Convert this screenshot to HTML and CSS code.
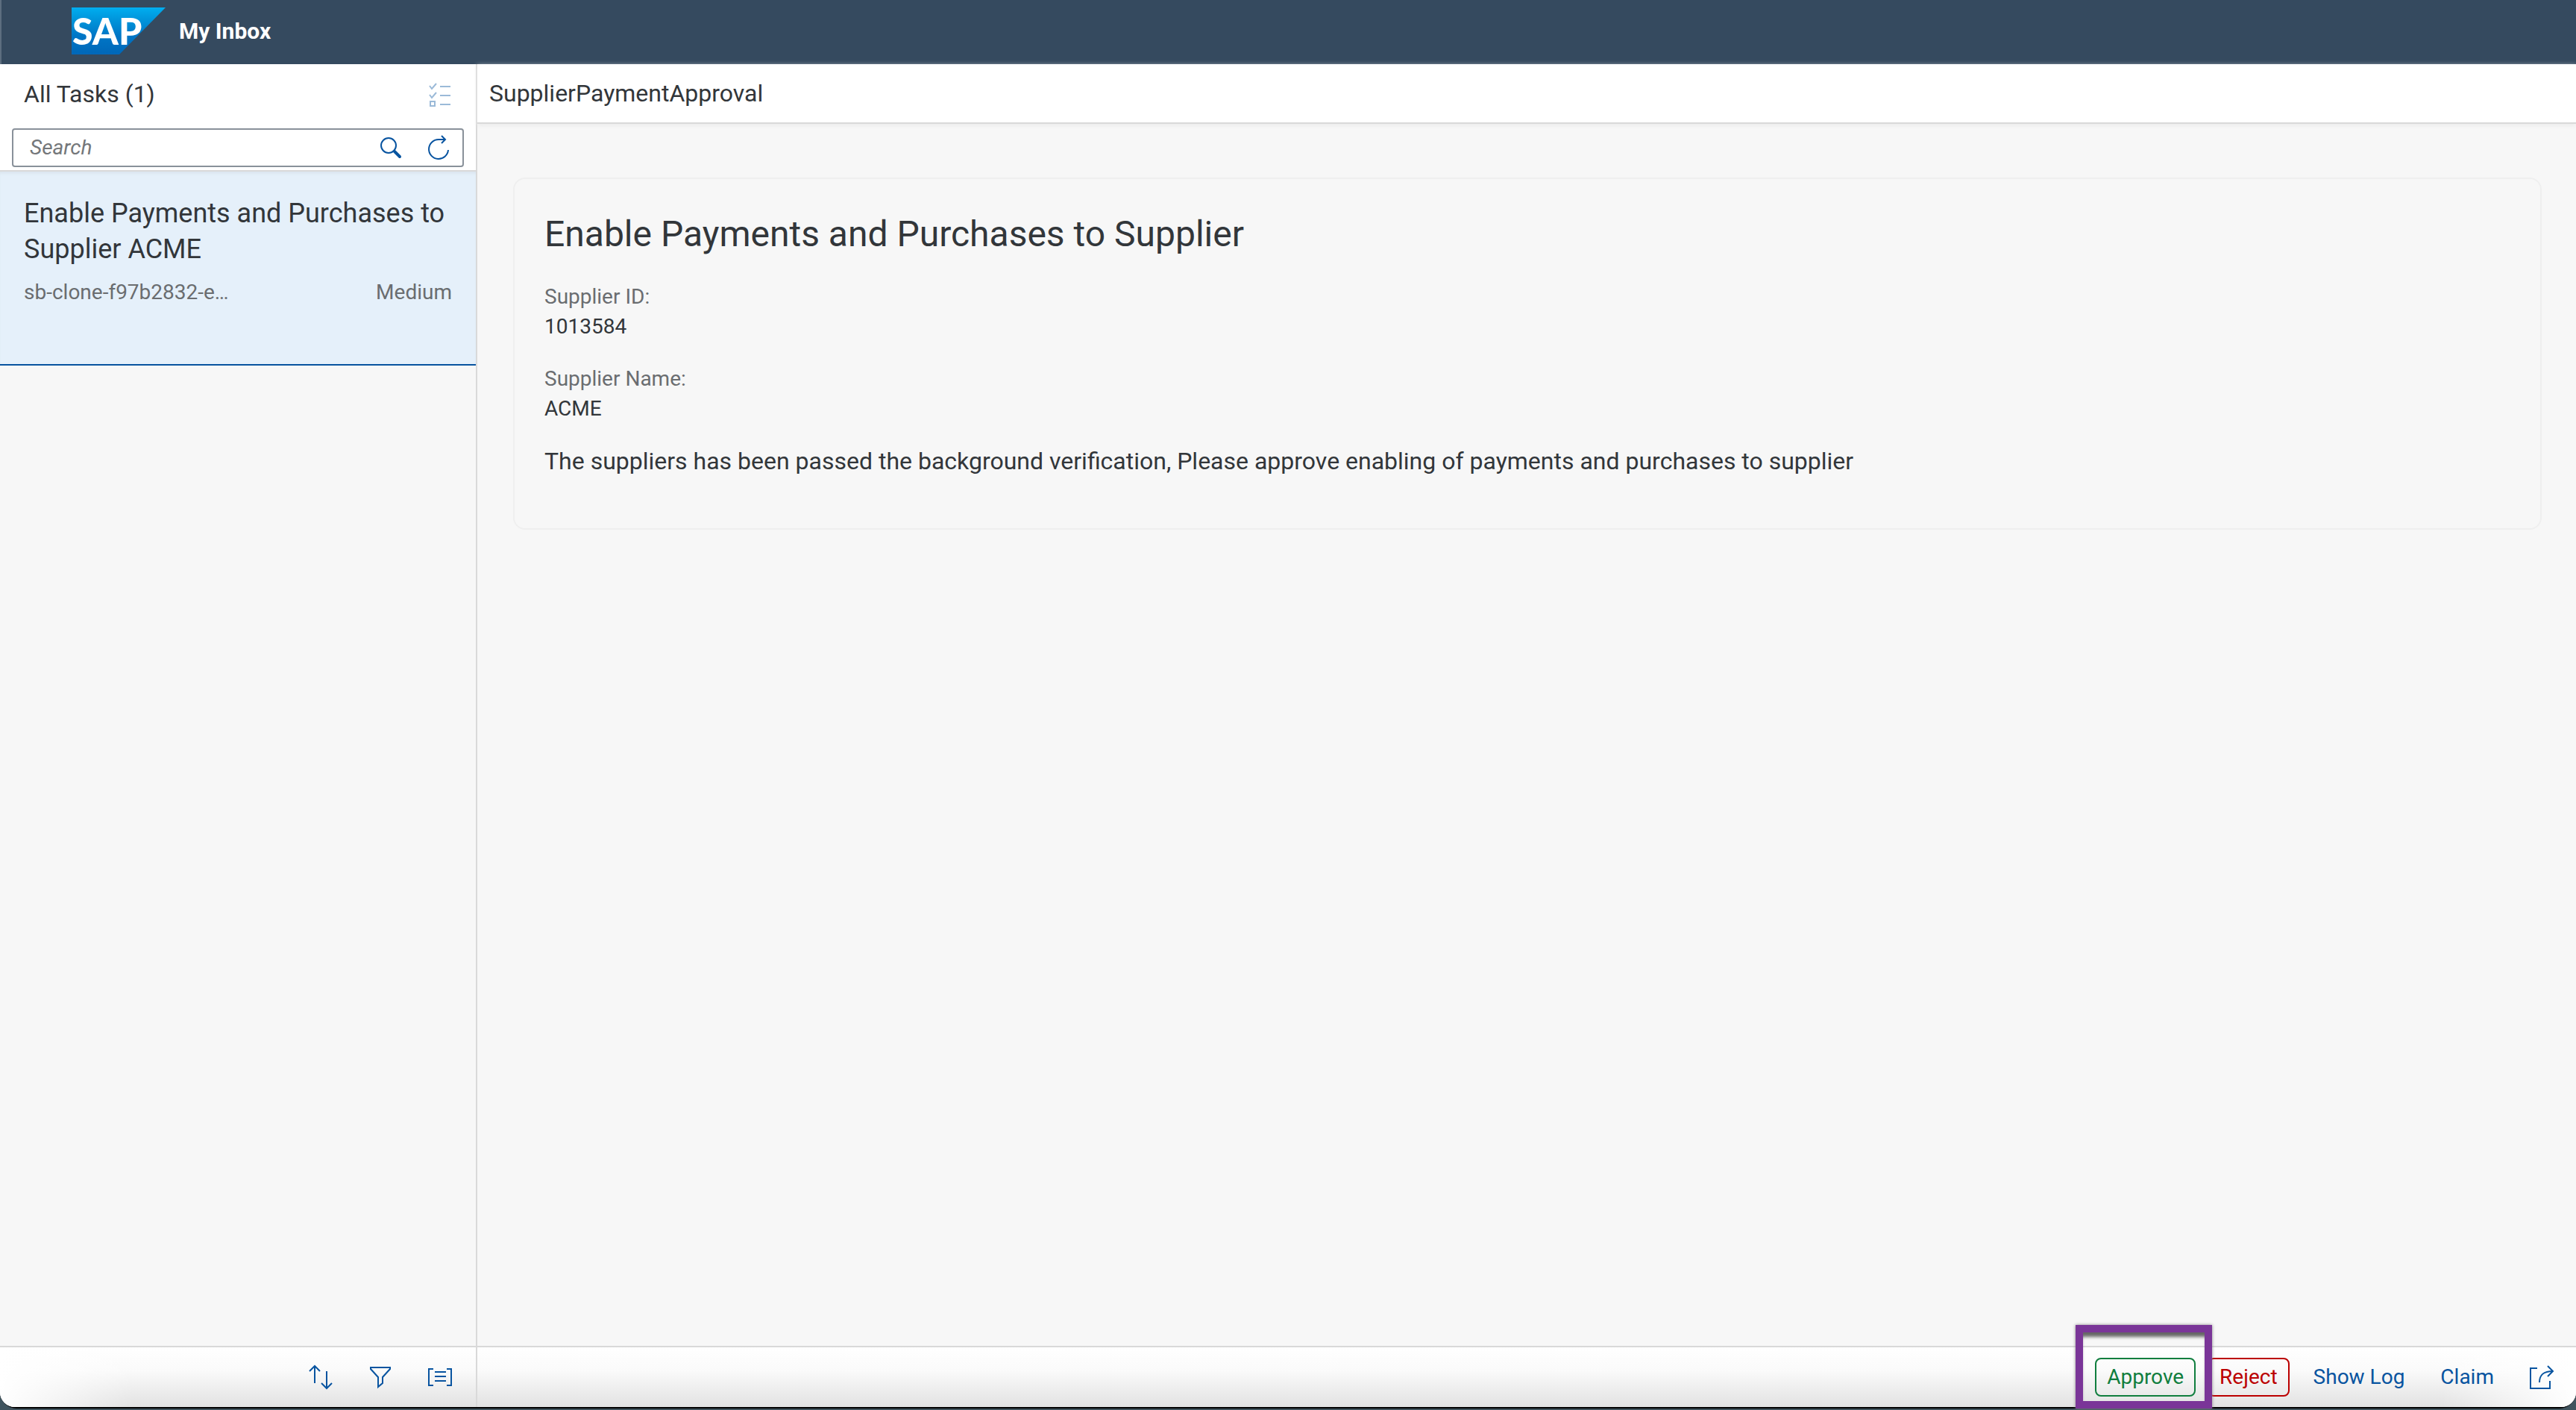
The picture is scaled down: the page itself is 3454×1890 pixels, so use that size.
FILE: index.html
```html
<!DOCTYPE html>
<html lang="en">
<head>
<meta charset="utf-8">
<title>My Inbox</title>
<link rel="stylesheet" href="styles.css">
</head>
<body>
<div class="desktop">
<div class="app">
  <header class="shell">
    <svg class="logo" viewBox="0 0 126 63" role="img" aria-label="SAP">
      <defs>
        <linearGradient id="sapBlue" x1="0" y1="0" x2="0" y2="1">
          <stop offset="0" stop-color="#00aef0"/>
          <stop offset="0.25" stop-color="#0096dc"/>
          <stop offset="0.6" stop-color="#0076c6"/>
          <stop offset="1" stop-color="#0067b8"/>
        </linearGradient>
      </defs>
      <path d="M0 0H126L64 63H0Z" fill="url(#sapBlue)"/>
      <text class="logo-text" x="1" y="50">SAP</text>
    </svg>
    <h1 class="shell-title">My Inbox</h1>
  </header>

  <div class="panes">
    <aside class="master">
      <div class="master-head">
        <div class="master-bar">
          <h2 class="bar-title">All Tasks (1)</h2>
          <button class="icon-button" type="button" aria-label="Multi-select" disabled>
            <svg class="icon" viewBox="0 0 32 32"><path d="M2 5l3 4 6-7M2 17l3 4 6-7M3 26h6v6h-6zM16 6h14M16 18h14M16 30h14"/></svg>
          </button>
        </div>
        <form class="search">
          <input class="search-input" type="search" placeholder="Search" aria-label="Search">
          <button class="icon-button" type="button" aria-label="Search">
            <svg class="icon" viewBox="0 0 32 32"><circle cx="13" cy="13" r="10"/><path class="handle" d="M21 21l7 7"/></svg>
          </button>
          <button class="icon-button" type="button" aria-label="Refresh">
            <svg class="icon" viewBox="0 0 32 32"><path d="M29 19a13 13 0 1 1-13-14h9M20 0l5 5-5 5"/></svg>
          </button>
        </form>
      </div>
      <ul class="tasks">
        <li>
          <a class="task" href="#task">
            <span class="task-title">Enable Payments and Purchases to Supplier ACME</span>
            <span class="task-meta"><span>sb-clone-f97b2832-e…</span><span>Medium</span></span>
          </a>
        </li>
      </ul>
      <footer class="footer master-footer">
        <button class="icon-button" type="button" aria-label="Sort">
          <svg class="icon" viewBox="0 0 32 32"><path d="M8 24V1M1 8l7-7 7 7M24 8v23M17 24l7 7 7-7"/></svg>
        </button>
        <button class="icon-button" type="button" aria-label="Filter">
          <svg class="icon" viewBox="0 0 32 32"><path d="M3 3H29V5L19 16V24L13 29V16L3 5Z"/></svg>
        </button>
        <button class="icon-button" type="button" aria-label="Group">
          <svg class="icon" viewBox="0 0 32 32"><path d="M7 5H1V27H7M25 5H31V27H25M9 9H24M9 15H24M9 21H24"/></svg>
        </button>
      </footer>
    </aside>

    <main class="detail">
      <div class="detail-head"><h2 class="bar-title">SupplierPaymentApproval</h2></div>
      <div class="detail-body">
        <section class="card" id="task">
          <h3 class="card-title">Enable Payments and Purchases to Supplier</h3>
          <dl class="fields">
            <div><dt>Supplier ID:</dt><dd>1013584</dd></div>
            <div><dt>Supplier Name:</dt><dd>ACME</dd></div>
          </dl>
          <p class="card-text">The suppliers has been passed the background verification, Please approve enabling of payments and purchases to supplier</p>
        </section>
      </div>
      <footer class="footer detail-footer">
        <div class="actions">
          <div class="marked">
            <button class="button approve" type="button">Approve</button>
            <span class="marker"></span>
          </div>
          <button class="button reject" type="button">Reject</button>
          <button class="button plain" type="button">Show Log</button>
          <button class="button plain" type="button">Claim</button>
        </div>
        <button class="icon-button" type="button" aria-label="Share">
          <svg class="icon" viewBox="0 0 32 32"><path d="M10 4H1V31H27V21M13 23C13 13 18 8 31 8M24 1l7 7-7 7"/></svg>
        </button>
      </footer>
    </main>
  </div>
</div>
</div>
</body>
</html>
```
FILE: styles.css
```css
* { box-sizing: border-box; }
html, body { height: 100%; margin: 0; }
body {
  font-family: Roboto, "Liberation Sans", sans-serif;
  font-size: 28px;
  line-height: 40px;
  color: #32363a;
}
h1, h2, h3, p, dl, dd, ul { margin: 0; padding: 0; font-weight: 400; }
ul { list-style: none; }
button { font: inherit; background: none; border: 0; padding: 0; }

.desktop { height: 100%; padding-bottom: 2px; background: #40545e; }
.app {
  display: flex;
  flex-direction: column;
  height: 100%;
  border-bottom: 2px solid #000;
  border-radius: 0 0 22px 22px;
  background: #f7f7f7;
}

.shell {
  display: flex;
  align-items: center;
  gap: 18px;
  height: 86px;
  padding: 0 94px;
  padding-bottom: 3px;
  background: #354a5f;
  border-left: 2px solid #5d6e7f;
}
.logo { width: 126px; height: 63px; }
.logo-text { font: 900 50px Lato, sans-serif; fill: #fff; }
.shell-title { font-size: 30px; font-weight: 700; color: #fff; }

.panes { flex: 1; display: flex; min-height: 0; }
.master {
  display: flex;
  flex-direction: column;
  flex: 0 0 640px;
  border-right: 2px solid #d9d9d9;
}
.master-head {
  padding: 0 16px 4px;
  background: #fff;
  border-bottom: 2px solid #d9d9d9;
}
.master-bar {
  display: flex;
  align-items: center;
  justify-content: space-between;
  height: 80px;
  margin-bottom: 6px;
  padding: 0 16px;
}
.bar-title { font-size: 32px; }
.icon-button { display: flex; color: #0854a0; }
.icon-button:disabled { opacity: 0.4; }
.icon { width: 32px; height: 32px; fill: none; stroke: currentColor; stroke-width: 2; overflow: visible; }
.handle { stroke-width: 4; stroke-linecap: round; }
.search {
  display: flex;
  align-items: center;
  gap: 32px;
  height: 52px;
  padding: 0 16px 0 22px;
  border: 2px solid #89919a;
  border-radius: 4px;
}
.search-input {
  flex: 1;
  min-width: 0;
  padding: 0;
  border: 0;
  outline: 0;
  background: none;
  font: inherit;
}
.search-input::placeholder { color: #74777a; font-style: italic; opacity: 1; }

.tasks { flex: 1; }
.task {
  display: block;
  height: 260px;
  padding: 32px;
  background: #e5f0fa;
  border-bottom: 2px solid #0854a0;
  box-shadow: inset 0 4px 4px -2px #d9e3ec;
  color: inherit;
  text-decoration: none;
}
.task-title { display: block; font-size: 36px; line-height: 48px; }
.task-meta { display: flex; justify-content: space-between; margin-top: 14px; color: #6a6d70; }

.footer {
  display: flex;
  align-items: center;
  justify-content: flex-end;
  height: 82px;
  border-top: 2px solid #d9d9d9;
}
.master-footer {
  gap: 48px;
  padding: 0 32px;
  border-bottom-left-radius: 20px;
  background:
    linear-gradient(to right, #fff, transparent 180px),
    linear-gradient(#fff 0%, #fafafa 40%, #e2e2e2 100%);
}

.detail { flex: 1; display: flex; flex-direction: column; min-width: 0; }
.detail-head {
  display: flex;
  align-items: center;
  height: 80px;
  padding: 0 16px;
  background: #fff;
  border-bottom: 2px solid #d9d9d9;
  box-shadow: 0 2px 6px #eaeaea;
}
.detail-body { flex: 1; padding: 72px 46px 0 48px; }
.card {
  height: 472px;
  padding: 42px 40px;
  border: 2px solid #efefef;
  border-radius: 16px;
}
.card-title { font-size: 48px; line-height: 64px; }
.fields { display: grid; gap: 30px; margin: 32px 0 30px; }
.fields dt { color: #6a6d70; }
.card-text { font-size: 32px; }

.detail-footer {
  gap: 32px;
  padding: 0 30px;
  border-bottom-right-radius: 20px;
  background:
    linear-gradient(to left, #fff, transparent 180px),
    linear-gradient(#fff 0%, #fafafa 40%, #e2e2e2 100%);
}
.actions { display: flex; gap: 16px; }
.button { height: 52px; padding: 0 14px; border: 2px solid transparent; border-radius: 8px; }
.approve { color: #107e3e; border-color: #107e3e; }
.reject { color: #b00; border-color: #b00; }
.plain { color: #0854a0; }
.marked { position: relative; display: flex; }
.marker {
  position: absolute;
  inset: -44px -22px -16px -26px;
  border: 10px solid #7a3598;
  box-shadow: inset 0 8px 4px -2px #666, 0 0 4px #888;
}
```
